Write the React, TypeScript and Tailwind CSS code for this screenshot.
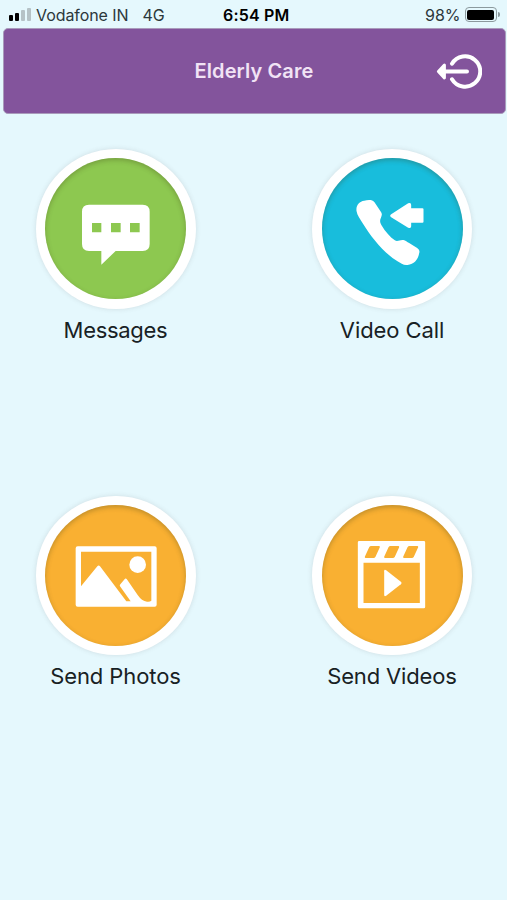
import React from 'react';

interface MenuItem {
  id: string;
  label: string;
  color: string;
  labelClass: string;
  icon: React.ReactNode;
}

const MessageIcon = () => (
  <svg viewBox="33 27 480 480" className="w-40 h-40" fill="white">
    <path
      fillRule="evenodd"
      d="M192 194H353Q374 194 374 215V312Q374 333 353 333H272L229 374V333H192Q171 333 171 312V215Q171 194 192 194ZM201 249V277H229V249ZM258 249V277H287V249ZM315 249V277H344V249Z"
    />
  </svg>
);

const CallIcon = () => (
  <svg viewBox="29.5 27 480 480" className="w-40 h-40" fill="white">
    <path d="M163 213C161 195 172 184 186 182C197 180 211 178 217 187L236 215C241 223 239 227 236 234C232 243 234 249 239 257C249 274 263 290 278 301C287 306 294 298 304 300C310 301 315 306 321 309L345 324C352 329 353 334 351 340C348 358 336 373 316 375C305 377 296 370 286 364C243 337 207 291 183 252C174 238 165 226 163 213Z" />
    <path d="M267 223L318 190Q327 186 327 195V205H361Q364 205 364 208V245Q364 248 361 248H327V259Q327 267 318 263L267 232Q261 228 267 223Z" />
  </svg>
);

const PhotoIcon = () => (
  <svg viewBox="33 28 480 480" className="w-40 h-40" fill="white">
    <path
      fillRule="evenodd"
      d="M158 182H389Q395 182 395 188V357Q395 363 389 363H158Q152 363 152 357V188Q152 182 158 182ZM168 198V302L217 242Q221 237 225 242L304 347H317L285 302Q283 299 286 296L300 279Q303 277 305 280L338 328Q350 346 366 348Q375 349 379 345V198Z"
    />
    <circle cx="338" cy="237" r="25" />
  </svg>
);

const VideoIcon = () => (
  <svg viewBox="29.5 27 480 480" className="w-40 h-40" fill="white">
    <path
      fillRule="evenodd"
      d="M171 165H365Q369 165 369 169V363Q369 367 365 367H171Q167 367 167 363V169Q167 165 171 165ZM184 230V351H353V230ZM207 180Q203 180 201 184L188 212Q187 216 191 216H214Q218 216 220 212L233 184Q234 180 230 180ZM265 180Q261 180 259 184L246 212Q245 216 249 216H272Q276 216 278 212L291 184Q292 180 288 180ZM322 180Q318 180 316 184L303 212Q302 216 306 216H329Q333 216 335 212L348 184Q349 180 345 180Z"
    />
    <path d="M246 256Q246 249 252 253L296 287Q301 291 296 295L252 329Q246 333 246 326Z" />
  </svg>
);

const LogoutIcon = () => (
  <svg viewBox="0 0 46 38" className="w-[46px] h-[38px]" fill="none" stroke="white" strokeLinecap="round" strokeLinejoin="round">
    <path d="M16 11.7A15.2 15.2 0 1 1 16 27.3" strokeWidth="4" />
    <path d="M7 19.5H31" strokeWidth="4" />
    <path d="M8.4 13L2.4 19.5L8.4 26Z" strokeWidth="3" fill="white" />
  </svg>
);

const menuItems: MenuItem[] = [
  { id: 'messages', label: 'Messages', color: 'bg-[#8dc850]', labelClass: 'tracking-[-0.3px]', icon: <MessageIcon /> },
  { id: 'call', label: 'Video Call', color: 'bg-[#18bddc]', labelClass: 'tracking-[-0.1px]', icon: <CallIcon /> },
  { id: 'photos', label: 'Send Photos', color: 'bg-[#f9b032]', labelClass: 'tracking-[-0.1px]', icon: <PhotoIcon /> },
  { id: 'videos', label: 'Send Videos', color: 'bg-[#f9b032]', labelClass: 'tracking-[-0.15px]', icon: <VideoIcon /> },
];

const StatusBar = () => (
  <div className="h-7 pt-px pl-[9px] pr-[7.5px] grid grid-cols-[1fr_auto_1fr] items-center text-[#2c373b] text-[16px]">
    <div className="flex items-center">
      <div className="flex items-end gap-[2px] h-[13px] mr-[5px]">
        <span className="w-[4px] h-[6px] bg-black rounded-[1px]" />
        <span className="w-[4px] h-[8px] bg-black rounded-[1px]" />
        <span className="w-[4px] h-[11px] bg-[#b5c2c6] rounded-[1px]" />
        <span className="w-[4px] h-[13px] bg-[#b5c2c6] rounded-[1px]" />
      </div>
      <span className="tracking-[-0.08px]">Vodafone IN</span>
      <span className="ml-[14px]">4G</span>
    </div>
    <span className="font-semibold text-black tracking-[0.2px] translate-x-[2px]">6:54 PM</span>
    <div className="flex items-center justify-end">
      <span>98%</span>
      <div className="ml-1 w-8 h-[15px] rounded-[4px] border border-[#8c9a9e] p-[1.5px]">
        <div className="h-full rounded-[2px] bg-black" />
      </div>
      <span className="ml-px w-[2px] h-[5px] rounded-r-full bg-[#8c9a9e]" />
    </div>
  </div>
);

const App: React.FC = () => {
  return (
    <div className="w-full h-[900px] overflow-hidden bg-[#e5f8fd] font-['Inter','Liberation_Sans',sans-serif]">
      <StatusBar />

      {/* Title bar */}
      <header className="ml-[2.5px] mr-[1.5px] h-[86px] rounded-[5px] border border-[#a99bbb] bg-[#83549c] grid grid-cols-[1fr_auto_1fr] items-center">
        <span />
        <h1 className="text-[20px] font-semibold text-[#f1e3f5] tracking-[0.1px]">Elderly Care</h1>
        <button className="justify-self-end mr-[23px]" aria-label="Log out">
          <LogoutIcon />
        </button>
      </header>

      {/* Main menu */}
      <main className="mt-[35px] ml-[5.5px] grid grid-cols-[220px_220px] gap-x-[56.5px] gap-y-[150px]">
        {menuItems.map((item) => (
          <button key={item.id} className="flex flex-col items-center h-[196.5px]">
            <span className="w-40 h-40 rounded-full bg-white flex items-center justify-center shadow-[0_0_5px_rgba(90,80,80,0.16)]">
              <span className={`w-[141px] h-[141px] shrink-0 rounded-full flex items-center justify-center shadow-[inset_0_2px_5px_rgba(60,60,20,0.3)] ${item.color}`}>
                <span className="shrink-0">{item.icon}</span>
              </span>
            </span>
            <span className={`mt-[5px] text-[22px] leading-8 text-[#182124] whitespace-nowrap ${item.labelClass}`}>{item.label}</span>
          </button>
        ))}
      </main>
    </div>
  );
};

export default App;
